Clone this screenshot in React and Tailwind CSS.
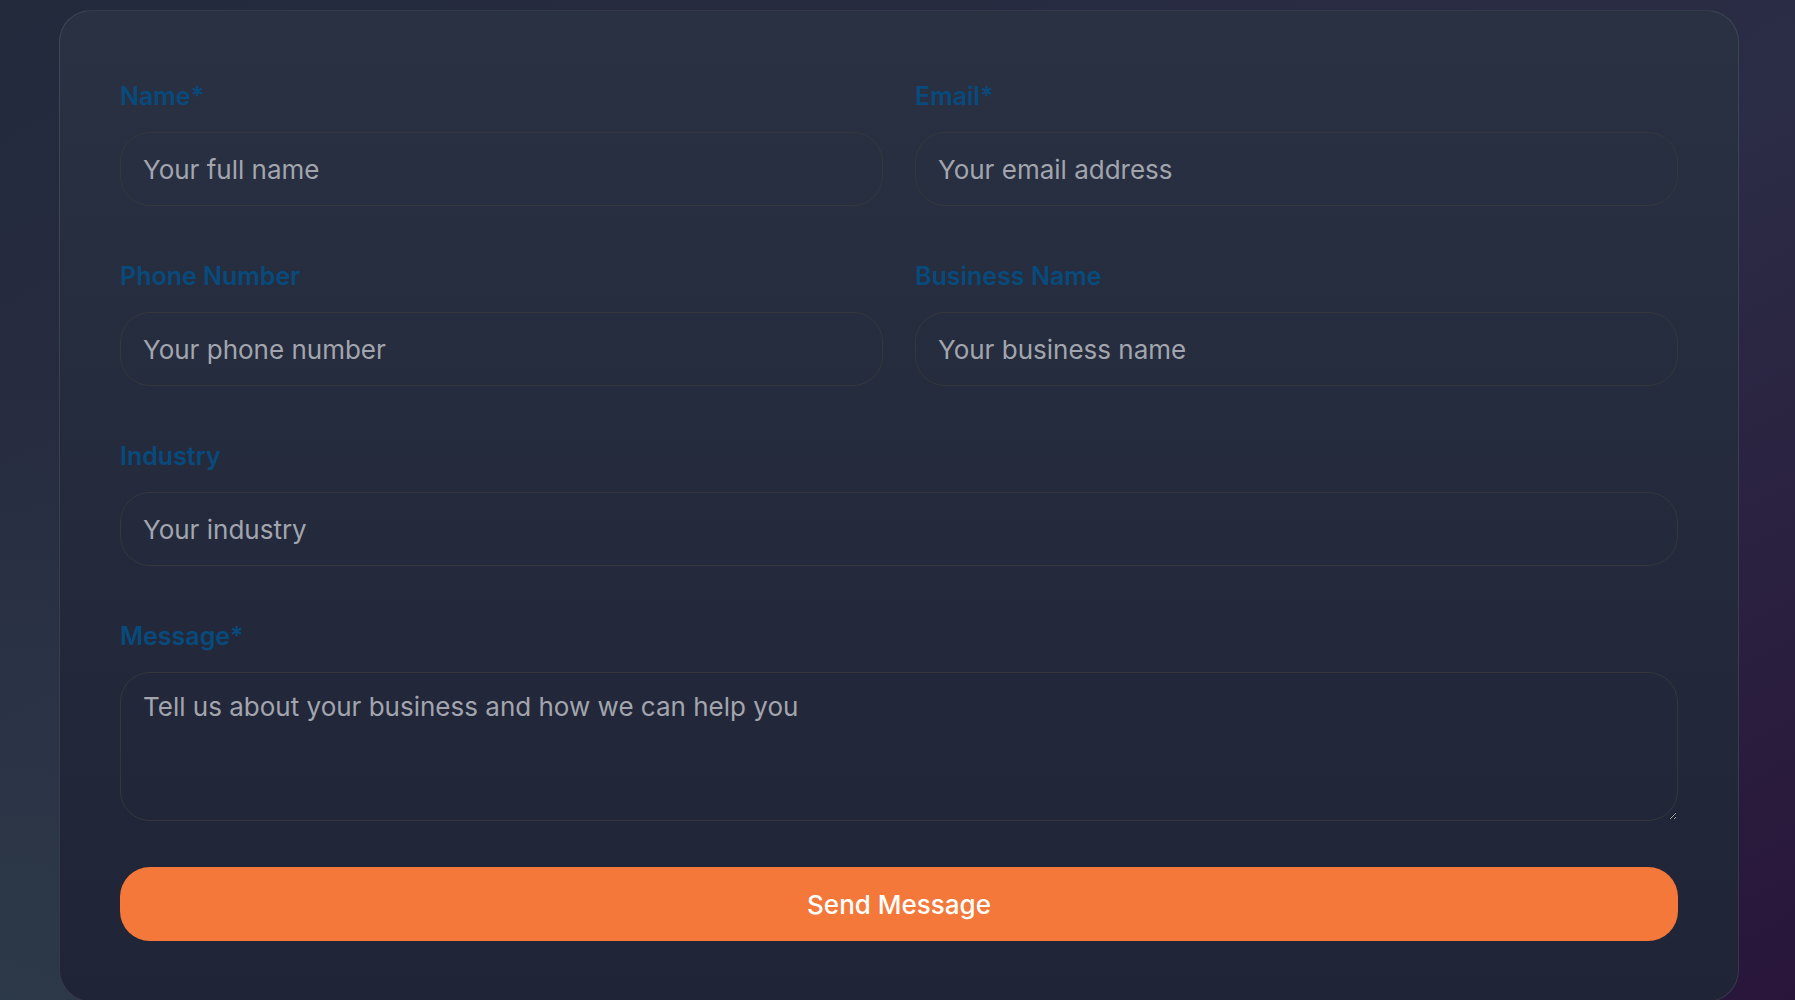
import React from "react";

/* one labelled field */
const Field = ({ label, placeholder, type = "text", wide }) => (
  <div className={wide ? "col-span-2 flex flex-col" : "flex flex-col"}>
    <label className="block mb-[18px] text-[25px] leading-9 font-semibold text-[#084a7c]">
      {label}
    </label>
    <input
      type={type}
      placeholder={placeholder}
      className="h-[74px] w-full rounded-[30px] border border-[#35373d] bg-transparent px-[22px] text-[26px] text-gray-200 placeholder:text-[#a2a5ae] outline-none"
    />
  </div>
);

const App = () => {
  return (
    <div className="h-[1000px] overflow-hidden pt-[10px] font-['Inter',sans-serif] bg-[radial-gradient(ellipse_at_bottom_left,#2c3948,transparent_45%),linear-gradient(to_bottom_right,#232a3c,#2b2c45_55%,#29153a)]">
      <div className="ml-[59px] w-[1680px] rounded-4xl border border-white/10 bg-linear-to-b from-[#293143] to-[#1f2436] px-15 pt-[67px] pb-15">
        <form className="flex flex-col" onSubmit={(e) => e.preventDefault()}>
          <div className="grid grid-cols-2 gap-x-8 gap-y-[52px]">
            <Field label="Name*" placeholder="Your full name" />
            <Field label="Email*" placeholder="Your email address" type="email" />
            <Field label="Phone Number" placeholder="Your phone number" />
            <Field label="Business Name" placeholder="Your business name" />
            <Field label="Industry" placeholder="Your industry" wide />
            {/* message */}
            <div className="col-span-2 flex flex-col">
              <label className="block mb-[18px] text-[25px] leading-9 font-semibold text-[#084a7c]">
                Message*
              </label>
              <textarea
                placeholder="Tell us about your business and how we can help you"
                className="h-[149px] w-full rounded-[30px] border border-[#35373d] bg-transparent px-[22px] pt-3.5 pb-4 text-[26px] leading-[39px] text-gray-200 placeholder:text-[#a2a5ae] outline-none"
              />
            </div>
          </div>
          <button
            type="submit"
            className="mt-[46px] h-[74px] w-full rounded-[30px] bg-[#f4783a] text-[26px] font-medium text-white"
          >
            Send Message
          </button>
        </form>
      </div>
    </div>
  );
};

export default App;
